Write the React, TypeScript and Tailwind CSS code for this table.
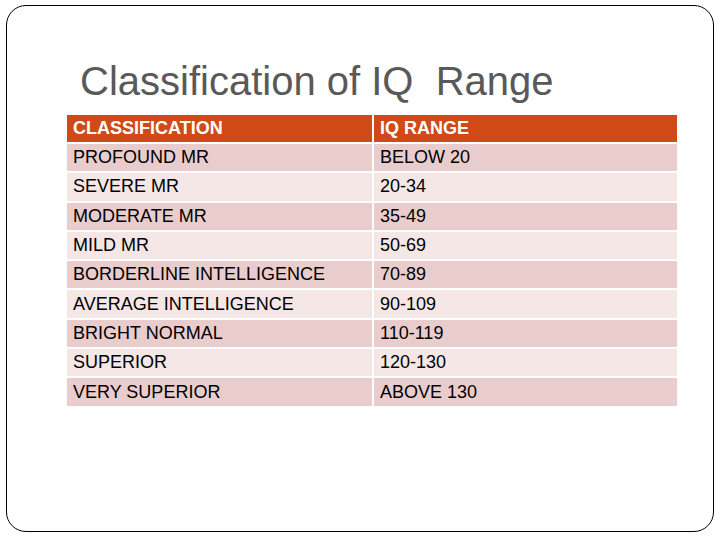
const rows: [string, string][] = [
  ["PROFOUND MR", "BELOW 20"],
  ["SEVERE MR", "20-34"],
  ["MODERATE MR", "35-49"],
  ["MILD MR", "50-69"],
  ["BORDERLINE INTELLIGENCE", "70-89"],
  ["AVERAGE INTELLIGENCE", "90-109"],
  ["BRIGHT NORMAL", "110-119"],
  ["SUPERIOR", "120-130"],
  ["VERY SUPERIOR", "ABOVE 130"],
];

export default function App() {
  return (
    <div className="w-[720px] h-[540px] bg-white p-0 font-['Liberation_Sans',Arial,sans-serif]">
      <div className="ml-[6px] mt-[5px] w-[708px] h-[527px] border border-black rounded-[20px] pt-[55px] pl-[60px]">
        <h1 className="ml-[13px] text-[40px] leading-[40px] text-[#595959] whitespace-pre">
          Classification of IQ  Range
        </h1>
        <div className="mt-[14px] w-[610px] grid grid-cols-[305px_303px] gap-[2px] text-[18px]">
          <div className="h-[27px] bg-[#cf4a17] text-white font-bold px-[6px] flex items-center">CLASSIFICATION</div>
          <div className="h-[27px] bg-[#cf4a17] text-white font-bold px-[6px] flex items-center">IQ RANGE</div>
          {rows.map(([a, b], i) => (
            <Row key={a} a={a} b={b} dark={i % 2 === 0} />
          ))}
        </div>
      </div>
    </div>
  );
}

function Row({ a, b, dark }: { a: string; b: string; dark: boolean }) {
  const bg = dark ? "bg-[#e9cdcc]" : "bg-[#f4e7e6]";
  return (
    <>
      <div className={`h-[27.3px] ${bg} px-[6px] flex items-center text-black`}>{a}</div>
      <div className={`h-[27.3px] ${bg} px-[6px] flex items-center text-black`}>{b}</div>
    </>
  );
}
